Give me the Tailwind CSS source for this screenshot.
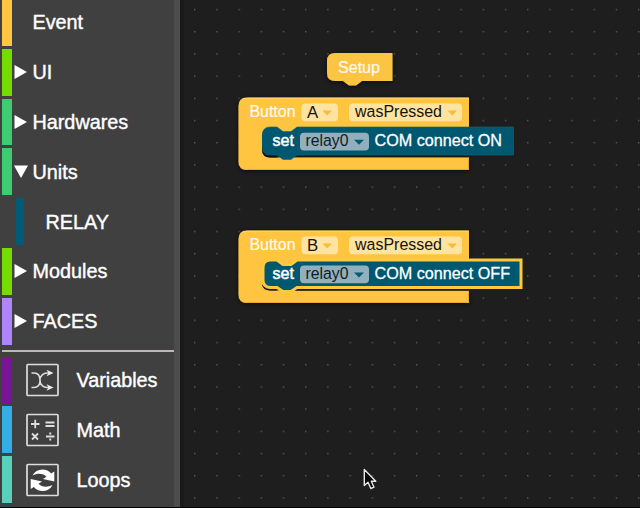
<!DOCTYPE html>
<html lang="en">
<head>
<meta charset="utf-8">
<title>Blocks</title>
<script src="https://cdn.jsdelivr.net/npm/@tailwindcss/browser@4"></script>
</head>
<body class="w-[640px] h-[508px] overflow-hidden bg-black font-['Liberation_Sans',Arial,sans-serif]">
<div class="flex h-[507px] overflow-hidden bg-[#1e1e1e]">
  <nav class="flex h-full w-[180px] shrink-0 flex-col border-r-[6px] border-[#4c4c4c] bg-[#404040] pl-[2px] text-[19.8px] leading-none text-white [-webkit-text-stroke:0.4px_white]">
    <div class="mb-[3px] flex h-[45.8px] shrink-0 items-center"><i class="h-full w-[9.5px] bg-[#ffc642]"></i><span class="pl-[21px]">Event</span></div>
    <div class="mb-[3px] flex h-[46.8px] shrink-0 items-center"><i class="h-full w-[9.5px] bg-[#76dc00]"></i><svg class="ml-[2.5px] mr-[5.5px] h-[14px] w-[13px]" viewBox="0 0 13 14"><path d="M.5 0L13 7L.5 14Z" fill="#fff"/></svg><span class="pt-[2px]">UI</span></div>
    <div class="mb-[3px] flex h-[46.8px] shrink-0 items-center"><i class="h-full w-[9.5px] bg-[#3fcb72]"></i><svg class="ml-[2.5px] mr-[5.5px] h-[14px] w-[13px]" viewBox="0 0 13 14"><path d="M.5 0L13 7L.5 14Z" fill="#fff"/></svg><span class="pt-[2px]">Hardwares</span></div>
    <div class="mb-[3px] flex h-[46.8px] shrink-0 items-center"><i class="h-full w-[9.5px] bg-[#3fcb72]"></i><svg class="ml-[2px] mr-[5px] h-[13px] w-[14px]" viewBox="0 0 14 13"><path d="M0 .5H14L7 13Z" fill="#fff"/></svg><span class="pt-[2px]">Units</span></div>
    <div class="mb-[3px] flex h-[46.8px] shrink-0 items-center pl-[13.5px]"><i class="h-full w-[8.5px] bg-[#005b74]"></i><span class="pl-[21.5px] pt-[2px]">RELAY</span></div>
    <div class="mb-[3px] flex h-[46.8px] shrink-0 items-center"><i class="h-full w-[9.5px] bg-[#76dc00]"></i><svg class="ml-[2.5px] mr-[5.5px] h-[14px] w-[13px]" viewBox="0 0 13 14"><path d="M.5 0L13 7L.5 14Z" fill="#fff"/></svg><span class="pt-[2px]">Modules</span></div>
    <div class="flex h-[46.8px] shrink-0 items-center"><i class="h-full w-[9.5px] bg-[#b083ff]"></i><svg class="ml-[2.5px] mr-[5.5px] h-[14px] w-[13px]" viewBox="0 0 13 14"><path d="M.5 0L13 7L.5 14Z" fill="#fff"/></svg><span class="pt-[2px]">FACES</span></div>
    <hr class="mt-[5px] mb-[5px] h-[2px] shrink-0 border-0 bg-[#bdb9b9]">
    <div class="mb-[3px] flex h-[46.8px] shrink-0 items-center"><i class="h-full w-[9.5px] bg-[#781496]"></i>
      <svg class="ml-[14px] mr-[18px] h-[34px] w-[33px]" viewBox="0 0 33 34" fill="none" stroke="#ddd"><rect x="1" y="1.500" width="31" height="31" rx="1" stroke-width="1.7"/><path d="M5.500 10H8C12.500 10 14 12.500 14 17.250S12.500 24.500 8 24.500H5.500M24 10H21C17.500 10 14 12.500 14 17.250S17.500 24.500 21 24.500H24" stroke-width="1.5"/><path d="M20.500 6.800L27.500 10L20.500 13.200L22.500 10ZM20.500 21.300L27.500 24.500L20.500 27.700L22.500 24.500Z" fill="#eee" stroke="none"/></svg><span class="pt-[2px]">Variables</span></div>
    <div class="mb-[3px] flex h-[46.8px] shrink-0 items-center"><i class="h-full w-[9.5px] bg-[#32aee4]"></i>
      <svg class="ml-[14px] mr-[18px] h-[34px] w-[33px]" viewBox="0 0 33 34" fill="none" stroke="#ddd"><rect x="1" y="1.500" width="31" height="31" rx="1" stroke-width="1.7"/><path d="M5 11H13.500M9.250 6.750V15.250M19.500 9.500H28.500M19.500 13H28.500M6 20.500L12 26.500M12 20.500L6 26.500M20 23.500H28.500" stroke-width="1.8"/><path d="M24.250 19.500V21.500M24.250 25.500V27.500" stroke-width="2"/></svg><span class="pt-[2px]">Math</span></div>
    <div class="flex h-[46.8px] shrink-0 items-center"><i class="h-full w-[9.5px] bg-[#58d1bc]"></i>
      <svg class="ml-[14px] mr-[18px] h-[34px] w-[33px]" viewBox="0 0 33 34"><rect x="1" y="1.500" width="31" height="31" rx="1" fill="none" stroke="#ddd" stroke-width="1.7"/><path d="M6.500 12.500C8.500 8.500 12 6.500 16.500 6.500C20 6.500 23 8 25.200 10.500L28.300 8.500V18.500L17 16L20.500 13.700C17.500 10.500 12 9.800 6.500 12.500ZM26.500 22C24.500 26 21 28 16.500 28C13 28 10 26.500 7.800 24L4.700 26V16L16 18.500L12.500 20.800C15.500 24 21 24.700 26.500 22Z" fill="#fff"/></svg><span class="pt-[2px]">Loops</span></div>
    <i class="mt-[2px] h-[4px] w-[9.5px] shrink-0 bg-[#29485b]"></i>
  </nav>
  <main class="h-full w-[460px]">
    <svg class="block h-[507px] w-[460px]" viewBox="180 0 460 507" font-family="Liberation Sans, Arial, sans-serif" font-size="16.8">
      <defs>
        <pattern id="dots" x="194" y="8.800" width="22.200" height="22.200" patternUnits="userSpaceOnUse"><rect width="1.400" height="1.400" fill="#585858"/></pattern>
        <filter id="shade" x="-10%" y="-20%" width="120%" height="150%"><feDropShadow dx="0" dy="1" stdDeviation="2.500" flood-color="#000" flood-opacity=".65"/></filter>
        <g id="event">
          <path filter="url(#shade)" fill="#ffc540" d="M247 0H469V30.500H297L291 35H283L277 30.500H270Q262 30.500 262 38V52Q262 60 270 60H469V72.500H247Q238.500 72.500 238.500 64V8.500Q238.500 0 247 0Z"/>
          <path d="M242 2Q244 .8 248 .8H468.500" fill="none" stroke="#ffd675"/>
          <path d="M247 72H468.500V60" fill="none" stroke="#e3aa2c"/>
          <rect x="301.500" y="6" width="36.500" height="17.800" rx="4" fill="#ffe3a1"/>
          <rect x="349" y="6" width="113" height="17.800" rx="4" fill="#ffe3a1"/>
          <path d="M322.500 13H332L327.250 18ZM447.500 13H457L452.250 18Z" fill="#f6bd3c"/>
          <text x="249.500" y="19.500" fill="#fffaf0" textLength="46" lengthAdjust="spacingAndGlyphs" stroke="#fffaf0" stroke-width=".2">Button</text>
          <text x="355" y="19.500" fill="#181208" textLength="87" lengthAdjust="spacingAndGlyphs">wasPressed</text>
        </g>
        <g id="setrelay">
          <rect x="300" y="6.500" width="69" height="17.800" rx="4" fill="#91afbd"/>
          <path d="M354 13.500H364L359 18.500Z" fill="#075a70"/>
          <text x="272.500" y="20" fill="#fff" stroke="#fff" stroke-width=".5" textLength="21.500" lengthAdjust="spacingAndGlyphs">set</text>
          <text x="305.500" y="20" fill="#151b20" textLength="43" lengthAdjust="spacingAndGlyphs">relay0</text>
        </g>
      </defs>
      <rect x="180" width="460" height="507" fill="#1e1e1e"/>
      <rect x="180" width="4" height="507" fill="#191919"/>
      <rect x="184" width="456" height="507" fill="url(#dots)"/>

      <path filter="url(#shade)" fill="#fbc443" d="M335 53H392.500V81H362L356 85.500H349L343 81H335Q327 81 327 73V61Q327 53 335 53Z"/>
      <text x="338" y="73" fill="#fffaf0" stroke="#fffaf0" stroke-width=".2" textLength="42" lengthAdjust="spacingAndGlyphs">Setup</text>

      <use href="#event" y="97.500"/>
      <text x="307" y="117.500" fill="#181208">A</text>
      <path fill="#111" d="M262 136V149Q262 157.500 270 157.500H278L274 155H270Q263 154 262 148Z"/>
      <path fill="#005770" stroke="#0b6a82" stroke-width=".6" d="M270 127H277L283 131.500H291L297 127H513.500V155H297L291 159.500H283L277 155H270Q262.500 155 262.500 147V135Q262.500 127 270 127Z"/>
      <use href="#setrelay" y="126.300"/>
      <text x="374.500" y="146.300" fill="#fff" stroke="#fff" stroke-width=".3" textLength="127.500" lengthAdjust="spacingAndGlyphs">COM connect ON</text>

      <use href="#event" y="230.500"/>
      <text x="307" y="250.500" fill="#181208">B</text>
      <path fill="none" stroke="#2a2109" stroke-width="1.300" d="M262.500 285Q265 289.800 270 289.800H277M295 290.200H469"/>
      <path fill="#005770" stroke="#ffc83d" stroke-width="3" d="M270 260H277L283 264.500H291L297 260H521V287.500H297L291 291.500H283L277 287.500H270Q263 287 263 280V268Q263 260 270 260Z"/>
      <use href="#setrelay" y="259"/>
      <text x="374.500" y="279" fill="#fff" stroke="#fff" stroke-width=".3" textLength="135.500" lengthAdjust="spacingAndGlyphs">COM connect OFF</text>

      <path d="M364.300 469.500V485.500L368 482.300L370.800 488.500L374 487.200L371.300 481.200H375.800Z" fill="#080808" stroke="#e8e8e8" stroke-width="1.400" stroke-linejoin="round"/>
    </svg>
  </main>
</div>
</body>
</html>
